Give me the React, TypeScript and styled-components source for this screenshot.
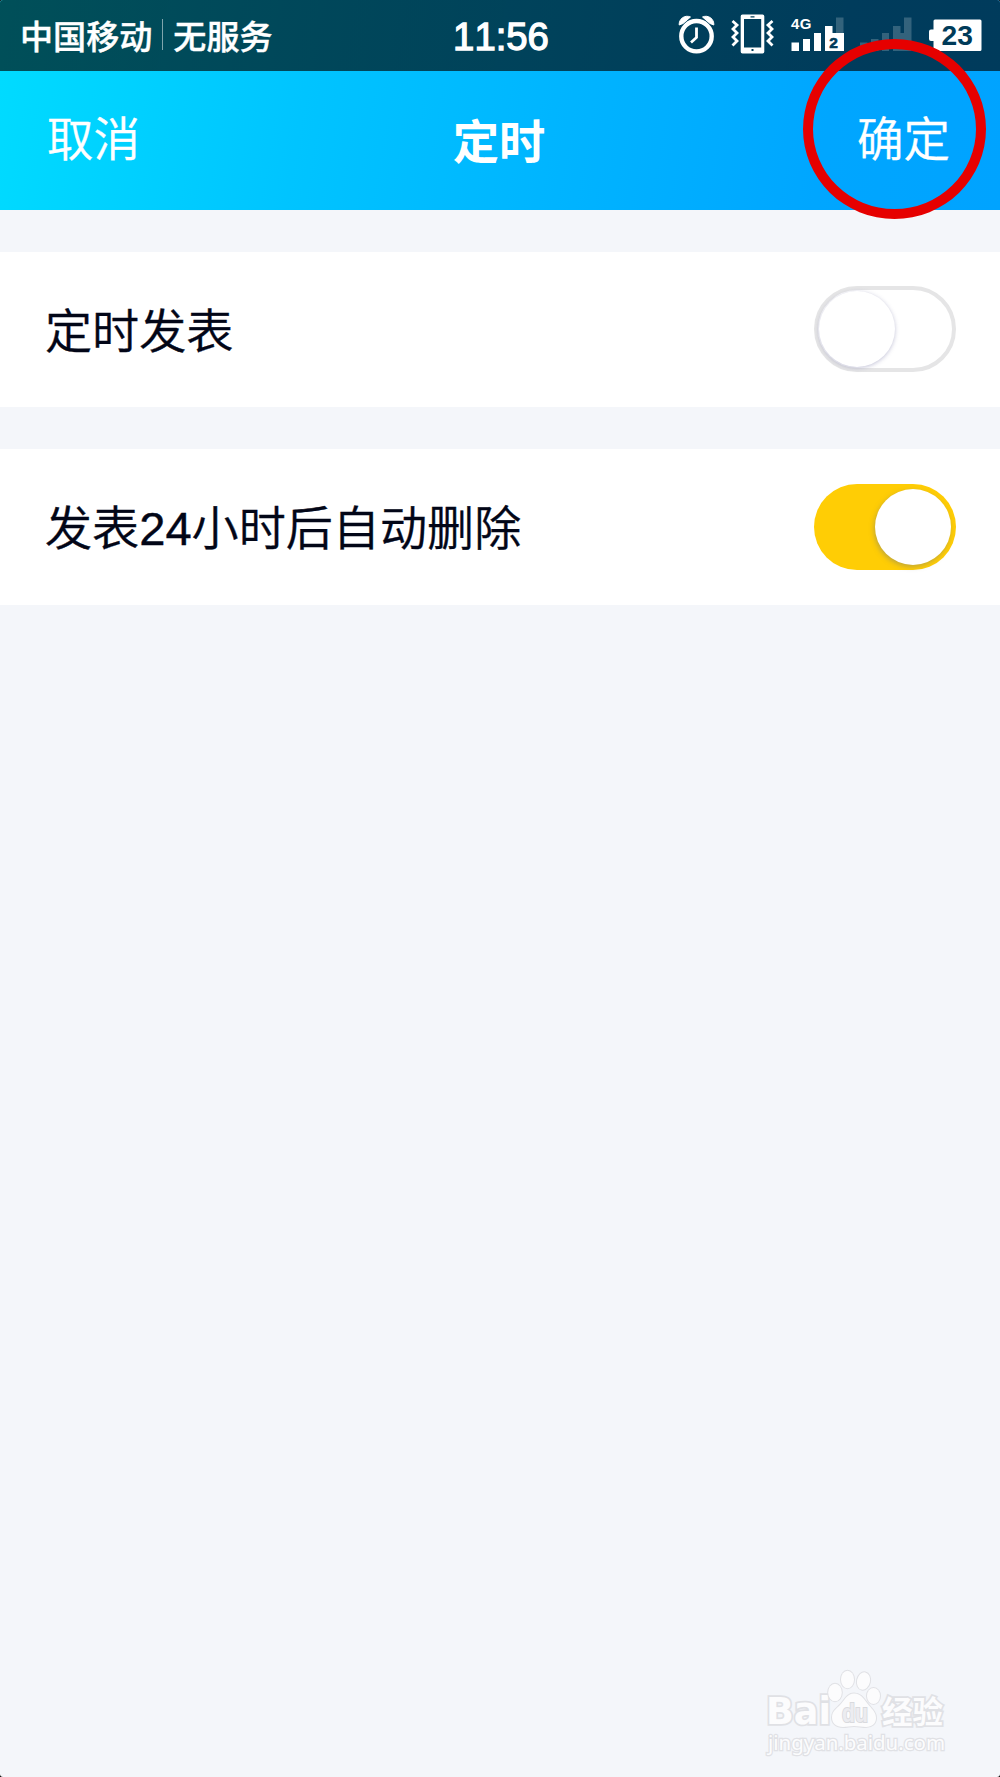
import React, { useState } from 'react';
import styled, { createGlobalStyle } from 'styled-components';

const GlobalStyle = createGlobalStyle`
  * { box-sizing: border-box; }
  body {
    margin: 0;
    background: #000;
    font-family: "Liberation Sans", "Noto Sans CJK SC", sans-serif;
  }
`;

const Screen = styled.div`
  position: relative;
  display: flex;
  flex-direction: column;
  width: 1000px;
  height: 1777px;
  overflow: hidden;
  border-radius: 3px;
  background: #f4f6fa;
`;

const Top = styled.header`
  flex: none;
  height: 210px;
  background: linear-gradient(100deg, #00dcff 0%, #00c4ff 31%, #00b4ff 57%, #00a6ff 82%, #00a3ff 100%);
`;

const StatusBar = styled.div`
  display: grid;
  grid-template-columns: 1fr auto 1fr;
  align-items: center;
  height: 71px;
  padding: 0 18px 2px 20px;
  background: linear-gradient(100deg, rgba(0, 4, 0, 0.65) 0%, rgba(0, 0, 0, 0.64) 100%);
  color: #fff;
`;

const Carrier = styled.div`
  display: flex;
  align-items: center;
  font-family: "Noto Sans CJK SC", sans-serif;
  font-size: 33.1px;
  line-height: 48px;
  font-weight: 500;
  white-space: nowrap;
  -webkit-text-stroke: 0.4px #fff;
`;

const Divider = styled.i`
  width: 1px;
  height: 31px;
  margin: 0 10px 0 10px;
  background: rgba(255, 255, 255, 0.5);
`;

const Clock = styled.time`
  padding-top: 4px;
  font-size: 38.3px;
  line-height: 48px;
  font-kerning: none;
  -webkit-text-stroke: 1.3px #fff;
`;

const StatusIcons = styled.div`
  display: flex;
  justify-content: flex-end;
  align-items: center;
  height: 69px;

  svg {
    display: block;
    flex: none;
    margin-bottom: 1px;
    overflow: visible;
  }
`;

const NavBar = styled.nav`
  display: grid;
  grid-template-columns: 1fr auto 1fr;
  align-items: center;
  height: 139px;
  padding: 0 50px 0 47px;
  color: #fff;
`;

const NavButton = styled.button<{ $end?: boolean }>`
  justify-self: ${p => (p.$end ? 'end' : 'start')};
  padding: 0 0 10px;
  border: 0;
  background: none;
  color: inherit;
  font-family: "Noto Sans CJK SC", sans-serif;
  font-size: 46.5px;
  line-height: 60px;
  font-weight: 350;
  -webkit-text-stroke: 0.4px #fff;
`;

const Title = styled.h1`
  margin: 0;
  padding: 0 0 4px 1px;
  font-family: "Noto Sans CJK SC", sans-serif;
  font-size: 46.3px;
  line-height: 60px;
  font-weight: 700;
`;

const Settings = styled.main`
  display: flex;
  flex-direction: column;
  gap: 42px;
  padding-top: 42px;
`;

const Row = styled.label`
  display: flex;
  align-items: center;
  justify-content: space-between;
  height: 155px;
  padding: 0 44px 1px 45px;
  background: #fff;

  & + & { height: 156px; }
`;

const RowLabel = styled.span`
  padding-top: 5px;
  color: #020617;
  font-size: 47.1px;
  line-height: 60px;
  font-weight: 350;
  -webkit-text-stroke: 0.4px #020617;
`;

const Track = styled.button<{ $on: boolean }>`
  display: flex;
  align-items: center;
  justify-content: ${p => (p.$on ? 'flex-end' : 'flex-start')};
  width: 142px;
  height: 86px;
  padding: 0 ${p => (p.$on ? '5px' : '1px')};
  border: ${p => (p.$on ? '0' : '4px solid #e5e5e6')};
  border-radius: 43px;
  background: ${p => (p.$on ? '#ffcd05' : '#fff')};
`;

const Knob = styled.span<{ $on: boolean }>`
  width: 76px;
  height: 76px;
  border-radius: 50%;
  background: #fff;
  box-shadow: ${p => (p.$on ? '-1px 2px 5px rgba(130, 130, 110, 0.5)' : '0 1px 4px rgba(105, 105, 155, 0.4)')};
`;

const Highlight = styled.div`
  position: absolute;
  left: 803px;
  top: 39px;
  width: 183px;
  height: 180px;
  border: 10.5px solid #e60000;
  border-radius: 50%;
  pointer-events: none;
`;

const Watermark = styled.svg`
  position: absolute;
  left: 760px;
  top: 1662px;
`;

const Alarm = () => (
  <svg width="36" height="40" viewBox="0 0 36 40" fill="none" stroke="#fff">
    <circle cx="18.500" cy="22.200" r="15.200" strokeWidth="4.400" />
    <path d="M18.500 13.500v10l-5.500 5" strokeWidth="2.800" />
    <path d="M1.200 11A8 8 0 0 1 12.500 3L5 9.500zM35.800 11A8 8 0 0 0 24.500 3L32 9.500z" fill="#fff" strokeWidth="1" />
  </svg>
);

const Vibrate = () => (
  <svg width="43" height="40" viewBox="0 0 43 40" fill="none">
    <path d="M11.500.5h20q1.800 0 1.800 1.800v35.400q0 1.800-1.800 1.800h-20q-1.800 0-1.800-1.800V2.300q0-1.800 1.800-1.800zM13 5v28.500h17.200V5zM19.500 2.200v1.200h4V2.200zM20.500 35v2h2v-2z" fill="#fff" fillRule="evenodd" />
    <path d="M1.500 7l4.500 4-4 4 4 4-4 4 4 4-4.500 4.500M41.500 7L37 11l4 4-4 4 4 4-4 4 4.500 4.500" stroke="#fff" strokeWidth="2.800" />
  </svg>
);

const Signal = () => (
  <svg width="54" height="36" viewBox="0 0 54 36" fill="#fff">
    <text x="1" y="12.500" fontSize="15" fontWeight="700" letterSpacing="0.5">4G</text>
    <path d="M1.500 26.500H9V35H1.500zM13 23h7v12h-7zM24 17h7v18h-7zM35 10h7.500v7H54v18H35z" />
    <path d="M46 1.500h7.500V17H46z" opacity=".2" />
    <text x="39.200" y="31.700" fontSize="15.500" fontWeight="700" fill="#003b59" stroke="#003b59" strokeWidth=".6">2</text>
  </svg>
);

const EmptySignal = () => (
  <svg width="54" height="36" viewBox="0 0 54 36" fill="#fff" opacity=".2">
    <path d="M1 26.500h7.500V35H1zM12 23h7.500v12H12zM23 17h7v18h-7zM34 10h7.500v7H45V1.500h7.500V35H34z" />
  </svg>
);

const Battery = () => (
  <svg width="54" height="32" viewBox="0 0 54 32">
    <path d="M7 1.500h45q1.500 0 1.500 1.500v28.500q0 1.500-1.500 1.500H7q-1.500 0-1.500-1.500V23H3q-2 0-2-2v-7.500q0-2 2-2h2.500V3q0-1.500 1.500-1.500z" fill="#fff" />
    <text x="13.600" y="27" fontSize="28.200" fontWeight="700" fill="#003b59">23</text>
  </svg>
);

const Gap = styled.span<{ $w: number }>`
  flex: none;
  width: ${p => p.$w}px;
`;

const BaiduMark = () => (
  <Watermark width="200" height="100" viewBox="0 0 200 100" fill="#fcfcfd" stroke="#e0e1e5" strokeWidth="2" paintOrder="stroke">
    <g strokeWidth="3.500" fontWeight="700">
      <text x="6" y="62" fontSize="37" fontFamily="DejaVu Sans" textLength="65" lengthAdjust="spacingAndGlyphs">Bai</text>
      <text x="122" y="60.500" fontSize="30.500" textLength="61" lengthAdjust="spacingAndGlyphs" fontFamily="Noto Sans CJK SC">经验</text>
    </g>
    <ellipse cx="75" cy="30.500" rx="6.800" ry="8.800" />
    <ellipse cx="87.500" cy="17.500" rx="6.500" ry="8.800" />
    <ellipse cx="103.500" cy="19" rx="6.500" ry="8.800" transform="rotate(12 103.500 19)" />
    <ellipse cx="113.500" cy="34" rx="6.500" ry="8" />
    <path d="M94 31.500c8 0 10.500 7 15 12 4 4.500 7 7.500 7 12.500 0 5.500-4 9-10 9-4 0-8-1-12-1s-7 1-11 1c-6.500 0-11-3.500-11-9.500 0-6 4-8.500 8-12.500 4.500-4.500 7-11.500 14-11.500z" />
    <text x="82" y="59.500" fontSize="25" fontWeight="700" fill="#ececf0" stroke="#d9dade" strokeWidth="2" textLength="26" lengthAdjust="spacingAndGlyphs">du</text>
    <text x="8" y="87.500" fontSize="20.500" fontFamily="Noto Sans" strokeWidth="2.500" textLength="177" lengthAdjust="spacingAndGlyphs">jingyan.baidu.com</text>
  </Watermark>
);

const Switch = ({ on, onToggle }: { on: boolean; onToggle: () => void }) => (
  <Track type="button" role="switch" aria-checked={on} $on={on} onClick={onToggle}>
    <Knob $on={on} />
  </Track>
);

export default function App() {
  const [timed, setTimed] = useState(false);
  const [autoDelete, setAutoDelete] = useState(true);

  return (
    <>
      <GlobalStyle />
      <Screen>
        <Top>
          <StatusBar>
            <Carrier>中国移动<Divider />无服务</Carrier>
            <Clock>11:56</Clock>
            <StatusIcons>
              <Alarm />
              <Gap $w={17} />
              <Vibrate />
              <Gap $w={16} />
              <Signal />
              <Gap $w={15} />
              <EmptySignal />
              <Gap $w={15} />
              <Battery />
            </StatusIcons>
          </StatusBar>
          <NavBar>
            <NavButton>取消</NavButton>
            <Title>定时</Title>
            <NavButton $end>确定</NavButton>
          </NavBar>
        </Top>
        <Settings>
          <Row>
            <RowLabel>定时发表</RowLabel>
            <Switch on={timed} onToggle={() => setTimed(!timed)} />
          </Row>
          <Row>
            <RowLabel>发表24小时后自动删除</RowLabel>
            <Switch on={autoDelete} onToggle={() => setAutoDelete(!autoDelete)} />
          </Row>
        </Settings>
        <Highlight />
        <BaiduMark />
      </Screen>
    </>
  );
}
